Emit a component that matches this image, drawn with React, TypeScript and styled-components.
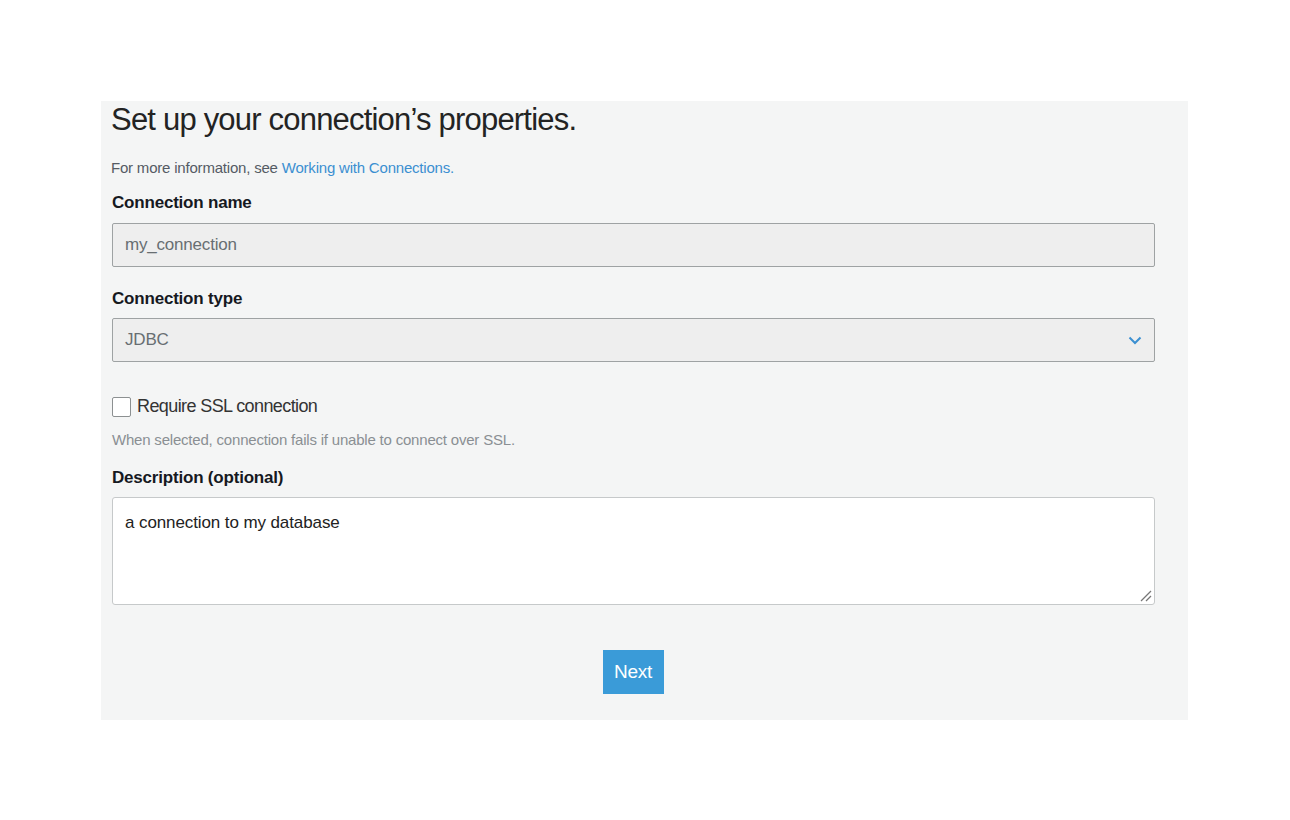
import React from "react";
import styled, { createGlobalStyle } from "styled-components";

const Global = createGlobalStyle`
  html, body { margin: 0; padding: 0; background: #ffffff; }
  body { font-family: "Liberation Sans", Arial, sans-serif; }
  * { box-sizing: border-box; }
`;

const Page = styled.div`
  width: 1290px;
  height: 820px;
  padding: 101px 0 0 101px;
`;

const Panel = styled.div`
  width: 1087px;
  height: 619px;
  background: #f4f5f5;
  padding: 0 33px 0 10px;
  display: flex;
  flex-direction: column;
`;

const Title = styled.h1`
  margin: 0;
  padding-top: 1px;
  font-size: 31px;
  font-weight: 400;
  color: #232323;
  line-height: 36px;
  letter-spacing: -0.8px;
`;

const Info = styled.p`
  margin: 21px 0 0 0;
  font-size: 15px;
  line-height: 18px;
  color: #545b64;
  letter-spacing: -0.2px;
`;

const Link = styled.a`
  color: #3b8fd1;
  text-decoration: none;
`;

const Label = styled.label<{ $top: number }>`
  display: block;
  margin-top: ${(p) => p.$top}px;
  padding-left: 1px;
  font-size: 17px;
  font-weight: 700;
  line-height: 20px;
  color: #16191f;
  letter-spacing: -0.2px;
`;

const Field = styled.div<{ $top: number }>`
  margin-top: ${(p) => p.$top}px;
  width: 1043px;
  height: 44px;
  margin-left: 1px;
  background: #eeeeee;
  border: 1px solid #9ea2a3;
  border-radius: 2px;
  display: flex;
  align-items: center;
  justify-content: space-between;
  padding: 0 12px 0 12px;
  font-size: 17px;
  color: #686e72;
  letter-spacing: -0.2px;
`;

const CheckRow = styled.div`
  margin-top: 34px;
  margin-left: 1px;
  display: flex;
  align-items: center;
  gap: 6px;
  font-size: 18px;
  color: #333333;
  letter-spacing: -0.6px;
`;

const Box = styled.span`
  width: 19px;
  height: 20px;
  border: 1px solid #8c9091;
  border-radius: 2px;
  background: #ffffff;
`;

const Hint = styled.p`
  margin: 14px 0 0 1px;
  font-size: 15px;
  line-height: 18px;
  color: #8a8f93;
  letter-spacing: -0.2px;
`;

const TextArea = styled.div`
  position: relative;
  margin: 9px 0 0 1px;
  width: 1043px;
  height: 108px;
  background: #ffffff;
  border: 1px solid #c6c9ca;
  border-radius: 3px;
  padding: 14px 12px;
  font-size: 17px;
  line-height: 22px;
  color: #222222;
  letter-spacing: -0.1px;
`;

const Grip = styled.svg`
  position: absolute;
  right: 2px;
  bottom: 2px;
`;

const Footer = styled.div`
  display: flex;
  justify-content: center;
  margin-top: 45px;
`;

const Button = styled.button`
  width: 61px;
  height: 44px;
  background: #3a9bd8;
  border: none;
  color: #ffffff;
  font-family: "Liberation Sans", Arial, sans-serif;
  font-size: 19px;
  letter-spacing: -0.3px;
  padding: 0;
`;

export default function App() {
  return (
    <Page>
      <Global />
      <Panel>
        <Title>Set up your connection’s properties.</Title>
        <Info>
          For more information, see <Link>Working with Connections.</Link>
        </Info>
        <Label $top={16}>Connection name</Label>
        <Field $top={10}>my_connection</Field>
        <Label $top={22}>Connection type</Label>
        <Field $top={9}>
          <span>JDBC</span>
          <svg width="14" height="9" viewBox="0 0 14 9">
            <polyline points="1.5,1.5 7,7 12.5,1.5" fill="none" stroke="#3b8fd1" strokeWidth="2" />
          </svg>
        </Field>
        <CheckRow>
          <Box />
          <span>Require SSL connection</span>
        </CheckRow>
        <Hint>When selected, connection fails if unable to connect over SSL.</Hint>
        <Label $top={19}>Description (optional)</Label>
        <TextArea>
          a connection to my database
          <Grip width="14" height="14" viewBox="0 0 14 14">
            <line x1="3" y1="13" x2="13" y2="3" stroke="#777" strokeWidth="1.3" />
            <line x1="8" y1="13" x2="13" y2="8" stroke="#777" strokeWidth="1.3" />
          </Grip>
        </TextArea>
        <Footer>
          <Button>Next</Button>
        </Footer>
      </Panel>
    </Page>
  );
}
